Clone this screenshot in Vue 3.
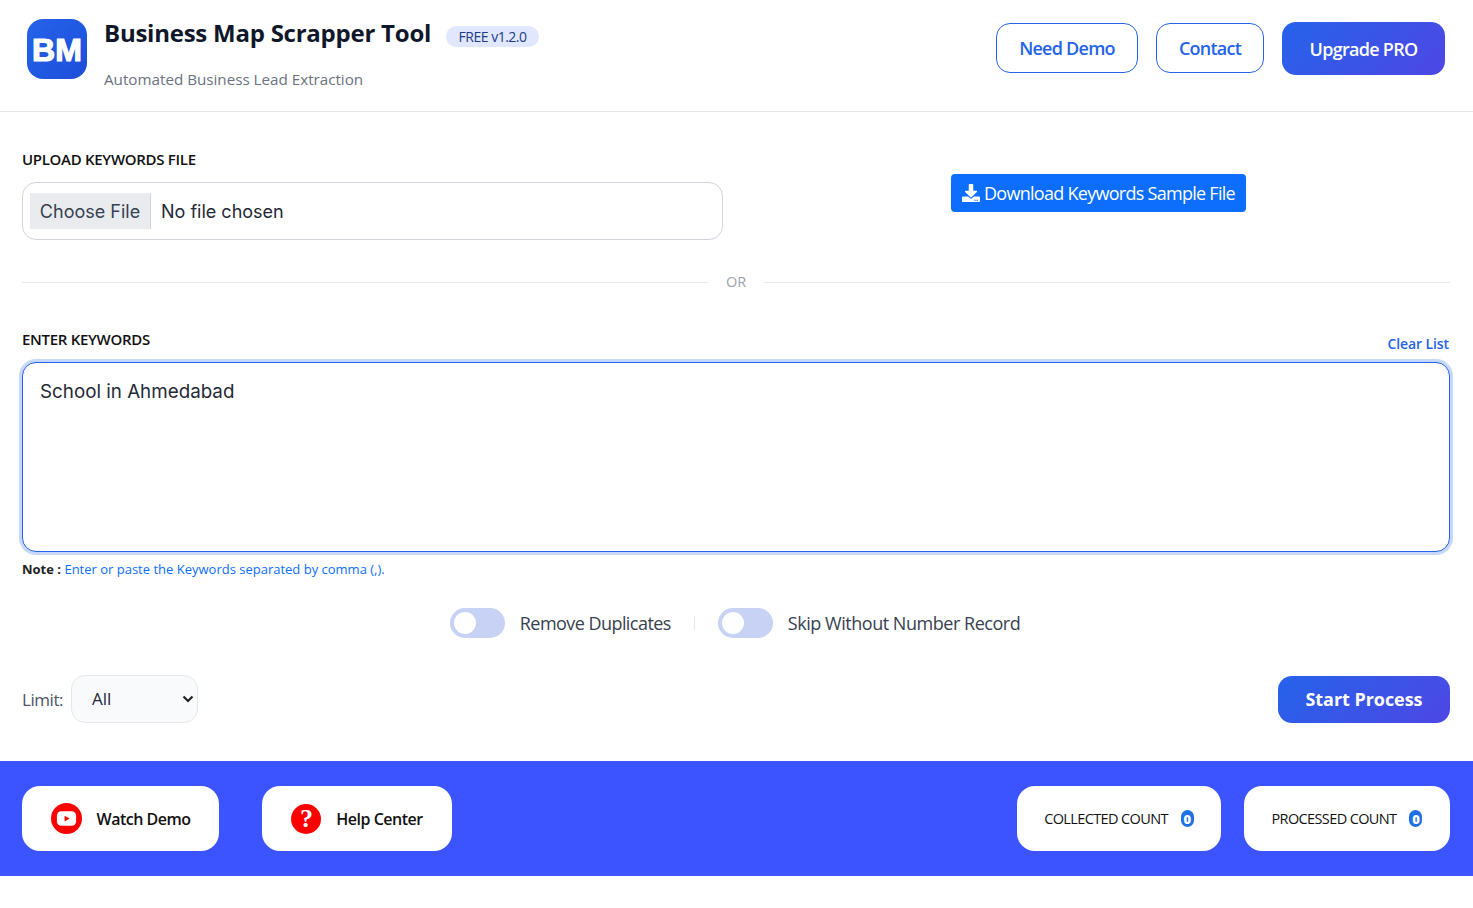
<template>
  <div class="page">
    <header class="topbar">
      <div class="brand">
        <div class="logo">BM</div>
        <div class="brand-text">
          <div class="title-row">
            <h1>Business Map Scrapper Tool</h1>
            <span class="version">FREE v1.2.0</span>
          </div>
          <p class="subtitle">Automated Business Lead Extraction</p>
        </div>
      </div>
      <nav class="top-actions">
        <a class="btn-outline demo">Need Demo</a>
        <a class="btn-outline contact">Contact</a>
        <a class="btn-gradient upgrade">Upgrade PRO</a>
      </nav>
    </header>

    <main class="content">
      <section class="upload-row">
        <div>
          <label class="field-label">UPLOAD KEYWORDS FILE</label>
          <div class="file-box">
            <input type="file" class="file-input" />
          </div>
        </div>
        <div class="download-col">
          <button class="download-btn">
            <svg viewBox="0 0 512 512" class="download-icon" fill="currentColor">
              <path d="M216 0h80c13.3 0 24 10.7 24 24v168h87.7c17.8 0 26.7 21.5 14.1 34.1L269.7 378.3c-7.5 7.5-19.8 7.5-27.3 0L90.1 226.1c-12.6-12.6-3.7-34.1 14.1-34.1H192V24c0-13.3 10.7-24 24-24zm296 376v112c0 13.3-10.7 24-24 24H24c-13.3 0-24-10.7-24-24V376c0-13.3 10.7-24 24-24h146.7l49 49c20.1 20.1 52.5 20.1 72.6 0l49-49H488c13.3 0 24 10.7 24 24zm-124 88c0-11-9-20-20-20s-20 9-20 20 9 20 20 20 20-9 20-20zm64 0c0-11-9-20-20-20s-20 9-20 20 9 20 20 20 20-9 20-20z" />
            </svg>
            <span>Download Keywords Sample File</span>
          </button>
        </div>
      </section>

      <div class="or-divider"><span>OR</span></div>

      <section class="keywords">
        <div class="keywords-head">
          <label class="field-label">ENTER KEYWORDS</label>
          <a class="clear-link">Clear List</a>
        </div>
        <textarea class="keywords-input" v-model="keywords"></textarea>
        <p class="note"><b>Note :</b> <span>Enter or paste the Keywords separated by comma (,).</span></p>
      </section>

      <section class="toggles">
        <label class="toggle-item">
          <span class="switch"><span class="knob"></span></span>
          <span class="tight">Remove Duplicates</span>
        </label>
        <span class="toggle-sep"></span>
        <label class="toggle-item">
          <span class="switch"><span class="knob"></span></span>
          <span>Skip Without Number Record</span>
        </label>
      </section>

      <section class="process-row">
        <div class="limit">
          <span class="limit-label">Limit:</span>
          <div class="select-wrap">
            <select class="limit-select">
              <option>All</option>
              <option>100</option>
              <option>500</option>
            </select>
            <svg class="select-arrow" viewBox="0 0 12 8" fill="none" stroke="currentColor" stroke-width="2.2">
              <path d="M1.5 1.5L6 6l4.5-4.5" />
            </svg>
          </div>
        </div>
        <button class="btn-gradient start">Start Process</button>
      </section>
    </main>

    <footer class="footer">
      <div class="footer-group help-group">
        <a class="footer-card watch">
          <span class="round-icon">
            <svg viewBox="0 0 24 24" width="23" height="23">
              <rect x="2" y="4.5" width="20" height="15" rx="4.5" fill="#fff" />
              <path d="M10 9l5.2 3-5.2 3z" fill="#f00" />
            </svg>
          </span>
          <span>Watch Demo</span>
        </a>
        <a class="footer-card help">
          <span class="round-icon question">?</span>
          <span>Help Center</span>
        </a>
      </div>
      <div class="footer-group counts">
        <div class="footer-card count" v-for="c in counts" :key="c.label">
          <span class="count-label">{{ c.label }}</span>
          <span class="count-badge">{{ c.value }}</span>
        </div>
      </div>
    </footer>
  </div>
</template>

<script setup>
import { ref } from 'vue'

const keywords = ref('School in Ahmedabad')

const counts = [
  { label: 'COLLECTED COUNT', value: 0 },
  { label: 'PROCESSED COUNT', value: 0 }
]
</script>

<style>
body {
  margin: 0;
  background: #fff;
}
</style>

<style scoped>
.page {
  font-family: "Open Sans", "Noto Sans", sans-serif;
  color: #111827;
  min-height: 908px;
}

.topbar {
  display: flex;
  align-items: flex-start;
  justify-content: space-between;
  height: 111px;
  padding: 0 28px 0 27px;
  border-bottom: 1px solid #e5e7eb;
}

.brand {
  display: flex;
  align-items: flex-start;
  gap: 17px;
}

.logo {
  width: 60px;
  height: 60px;
  margin-top: 19px;
  padding-top: 3px;
  box-sizing: border-box;
  border-radius: 16px;
  background: linear-gradient(135deg, #2563eb, #1d4ed8);
  color: #fff;
  display: flex;
  align-items: center;
  justify-content: center;
  font-family: "Liberation Sans", sans-serif;
  font-weight: 700;
  font-size: 32px;
  -webkit-text-stroke: 1.2px #fff;
}

.brand-text {
  padding-top: 15px;
}

.title-row {
  display: flex;
  align-items: center;
  gap: 15px;
}

h1 {
  margin: 0;
  font-size: 24px;
  line-height: 36px;
  font-weight: 700;
  color: #0f172a;
  letter-spacing: -0.24px;
}

.version {
  margin-top: 7px;
  background: #e0e7ff;
  color: #1e3a8a;
  font-size: 14px;
  line-height: 21px;
  padding: 0 12.5px;
  border-radius: 11px;
  letter-spacing: -0.5px;
}

.subtitle {
  margin: 17px 0 0;
  font-size: 15.2px;
  line-height: 22px;
  color: #6b7280;
}

.top-actions {
  display: flex;
  align-items: center;
  gap: 18px;
  margin-top: 22px;
}

.btn-outline {
  display: flex;
  align-items: center;
  justify-content: center;
  height: 48px;
  margin-bottom: 1px;
  border: 1px solid #2563eb;
  border-radius: 14px;
  color: #2563eb;
  font-size: 18px;
  font-weight: 600;
  letter-spacing: -0.75px;
}

.demo { width: 140px; }
.contact { width: 106px; }

.btn-gradient {
  display: flex;
  align-items: center;
  justify-content: center;
  border: 0;
  color: #fff;
  font-family: inherit;
  font-weight: 600;
  background: linear-gradient(135deg, #2563eb, #4f46e5);
  border-radius: 14px;
}

.upgrade {
  width: 163px;
  height: 53px;
  font-size: 18px;
  letter-spacing: -0.72px;
}

.content {
  padding: 0 23px 0 22px;
}

.upload-row {
  display: grid;
  grid-template-columns: 701px 1fr;
  gap: 24px;
  padding-top: 38px;
}

.field-label {
  display: block;
  font-size: 15px;
  line-height: 18px;
  font-weight: 600;
  color: #111;
  letter-spacing: -0.3px;
}

.file-box {
  margin-top: 14px;
  height: 56px;
  border: 1px solid #d1d5db;
  border-radius: 14px;
  display: flex;
  align-items: center;
  padding-left: 7px;
}

.file-input {
  font-family: Inter, sans-serif;
  font-size: 18px;
  color: #1f2937;
  width: 100%;
}

.file-input::file-selector-button {
  font-family: inherit;
  font-size: 18px;
  color: #374151;
  height: 36px;
  width: 121px;
  padding: 0;
  margin-right: 10px;
  background: #e9ebef;
  border: 0;
  border-right: 1px solid #d1d5db;
  border-radius: 0;
}

.download-col {
  display: flex;
  justify-content: center;
  padding-top: 24px;
}

.download-btn {
  display: flex;
  align-items: center;
  gap: 4px;
  height: 38px;
  width: 295px;
  padding: 0 0 0 11px;
  background: #0d6efd;
  color: #fff;
  border: 0;
  border-radius: 4px;
  font-family: inherit;
  font-size: 18px;
  letter-spacing: -0.72px;
  box-sizing: border-box;
}

.download-icon {
  width: 18px;
  height: 18px;
  flex-shrink: 0;
}

.or-divider {
  display: flex;
  align-items: center;
  gap: 18px;
  margin-top: 32px;
  color: #9ca3af;
  font-size: 14.5px;
  line-height: 20px;
}

.or-divider::before,
.or-divider::after {
  content: "";
  flex: 1;
  height: 1px;
  background: #e5e7eb;
}

.keywords {
  margin-top: 38px;
}

.keywords-head {
  display: flex;
  justify-content: space-between;
  align-items: flex-start;
  height: 32px;
}

.clear-link {
  color: #2563eb;
  font-size: 14px;
  font-weight: 600;
  line-height: 20px;
  padding-top: 4px;
  padding-right: 1px;
  letter-spacing: -0.1px;
}

.keywords-input {
  display: block;
  width: 100%;
  height: 190px;
  box-sizing: border-box;
  padding: 17px;
  margin: 0;
  border: 1.5px solid #2563eb;
  border-radius: 14px;
  box-shadow: 0 0 0 3px rgba(37, 99, 235, 0.25);
  outline: none;
  resize: none;
  font-family: Inter, sans-serif;
  font-size: 18.8px;
  line-height: 24px;
  color: #1f2937;
}

.note {
  margin: 8px 0 0;
  font-size: 13px;
  line-height: 18px;
  color: #0d6efd;
}

.note b {
  color: #222;
  font-weight: 700;
}

.toggles {
  display: flex;
  justify-content: center;
  align-items: center;
  gap: 23px;
  margin-top: 30px;
  padding-right: 2px;
}

.toggle-item {
  display: flex;
  align-items: center;
  gap: 15px;
  font-size: 18px;
  font-weight: 500;
  color: #374151;
  letter-spacing: -0.47px;
}

.tight {
  letter-spacing: -0.55px;
}

.switch {
  display: block;
  width: 55px;
  height: 30px;
  border-radius: 15px;
  background: #c7d2f5;
  padding: 4px;
  box-sizing: border-box;
}

.knob {
  display: block;
  width: 22px;
  height: 22px;
  border-radius: 50%;
  background: #fff;
}

.toggle-sep {
  width: 1px;
  height: 14px;
  background: #e5e7eb;
}

.process-row {
  display: flex;
  justify-content: space-between;
  align-items: center;
  margin-top: 37px;
}

.limit {
  display: flex;
  align-items: center;
  gap: 8px;
}

.limit-label {
  font-size: 17px;
  color: #4b5563;
  letter-spacing: -0.45px;
}

.select-wrap {
  position: relative;
}

.limit-select {
  display: block;
  width: 127px;
  height: 48px;
  padding: 0 0 2px 20px;
  background: #f8fafc;
  border: 1px solid #e5e7eb;
  border-radius: 14px;
  font-family: inherit;
  font-size: 17px;
  color: #1f2937;
  outline: none;
  appearance: none;
}

.select-arrow {
  position: absolute;
  right: 4px;
  top: 20px;
  width: 12px;
  height: 8px;
  color: #222;
  pointer-events: none;
}

.start {
  width: 172px;
  height: 47px;
  font-size: 18px;
  font-weight: 700;
  letter-spacing: -0.05px;
}

.footer {
  display: flex;
  justify-content: space-between;
  align-items: center;
  height: 115px;
  margin-top: 38px;
  padding: 0 23px 0 22px;
  background: #3b54ff;
}

.footer-group {
  display: flex;
  align-items: center;
}

.help-group { gap: 43px; }
.counts { gap: 23px; }

.footer-card {
  display: flex;
  align-items: center;
  justify-content: center;
  height: 65px;
  background: #fff;
  border-radius: 18px;
  color: #111;
  font-size: 16px;
  font-weight: 600;
  letter-spacing: -0.5px;
}

.watch { width: 197px; gap: 15px; }
.help { width: 190px; gap: 15px; }
.count { width: 204px; gap: 13px; }
.count + .count { width: 206px; }

.round-icon {
  display: flex;
  align-items: center;
  justify-content: center;
  width: 31px;
  height: 31px;
  border-radius: 50%;
  background: #f00;
}

.question {
  width: 30px;
  height: 30px;
  color: #fff;
  font-family: "Liberation Serif", serif;
  font-size: 26px;
  font-weight: 700;
}

.count-label {
  font-size: 14.5px;
  font-weight: 500;
  letter-spacing: -0.62px;
}

.count-badge {
  display: flex;
  align-items: center;
  justify-content: center;
  width: 13px;
  height: 17px;
  border-radius: 7px;
  background: #1f6fe5;
  color: #fff;
  font-size: 13px;
  font-weight: 800;
  letter-spacing: 0;
}
</style>
